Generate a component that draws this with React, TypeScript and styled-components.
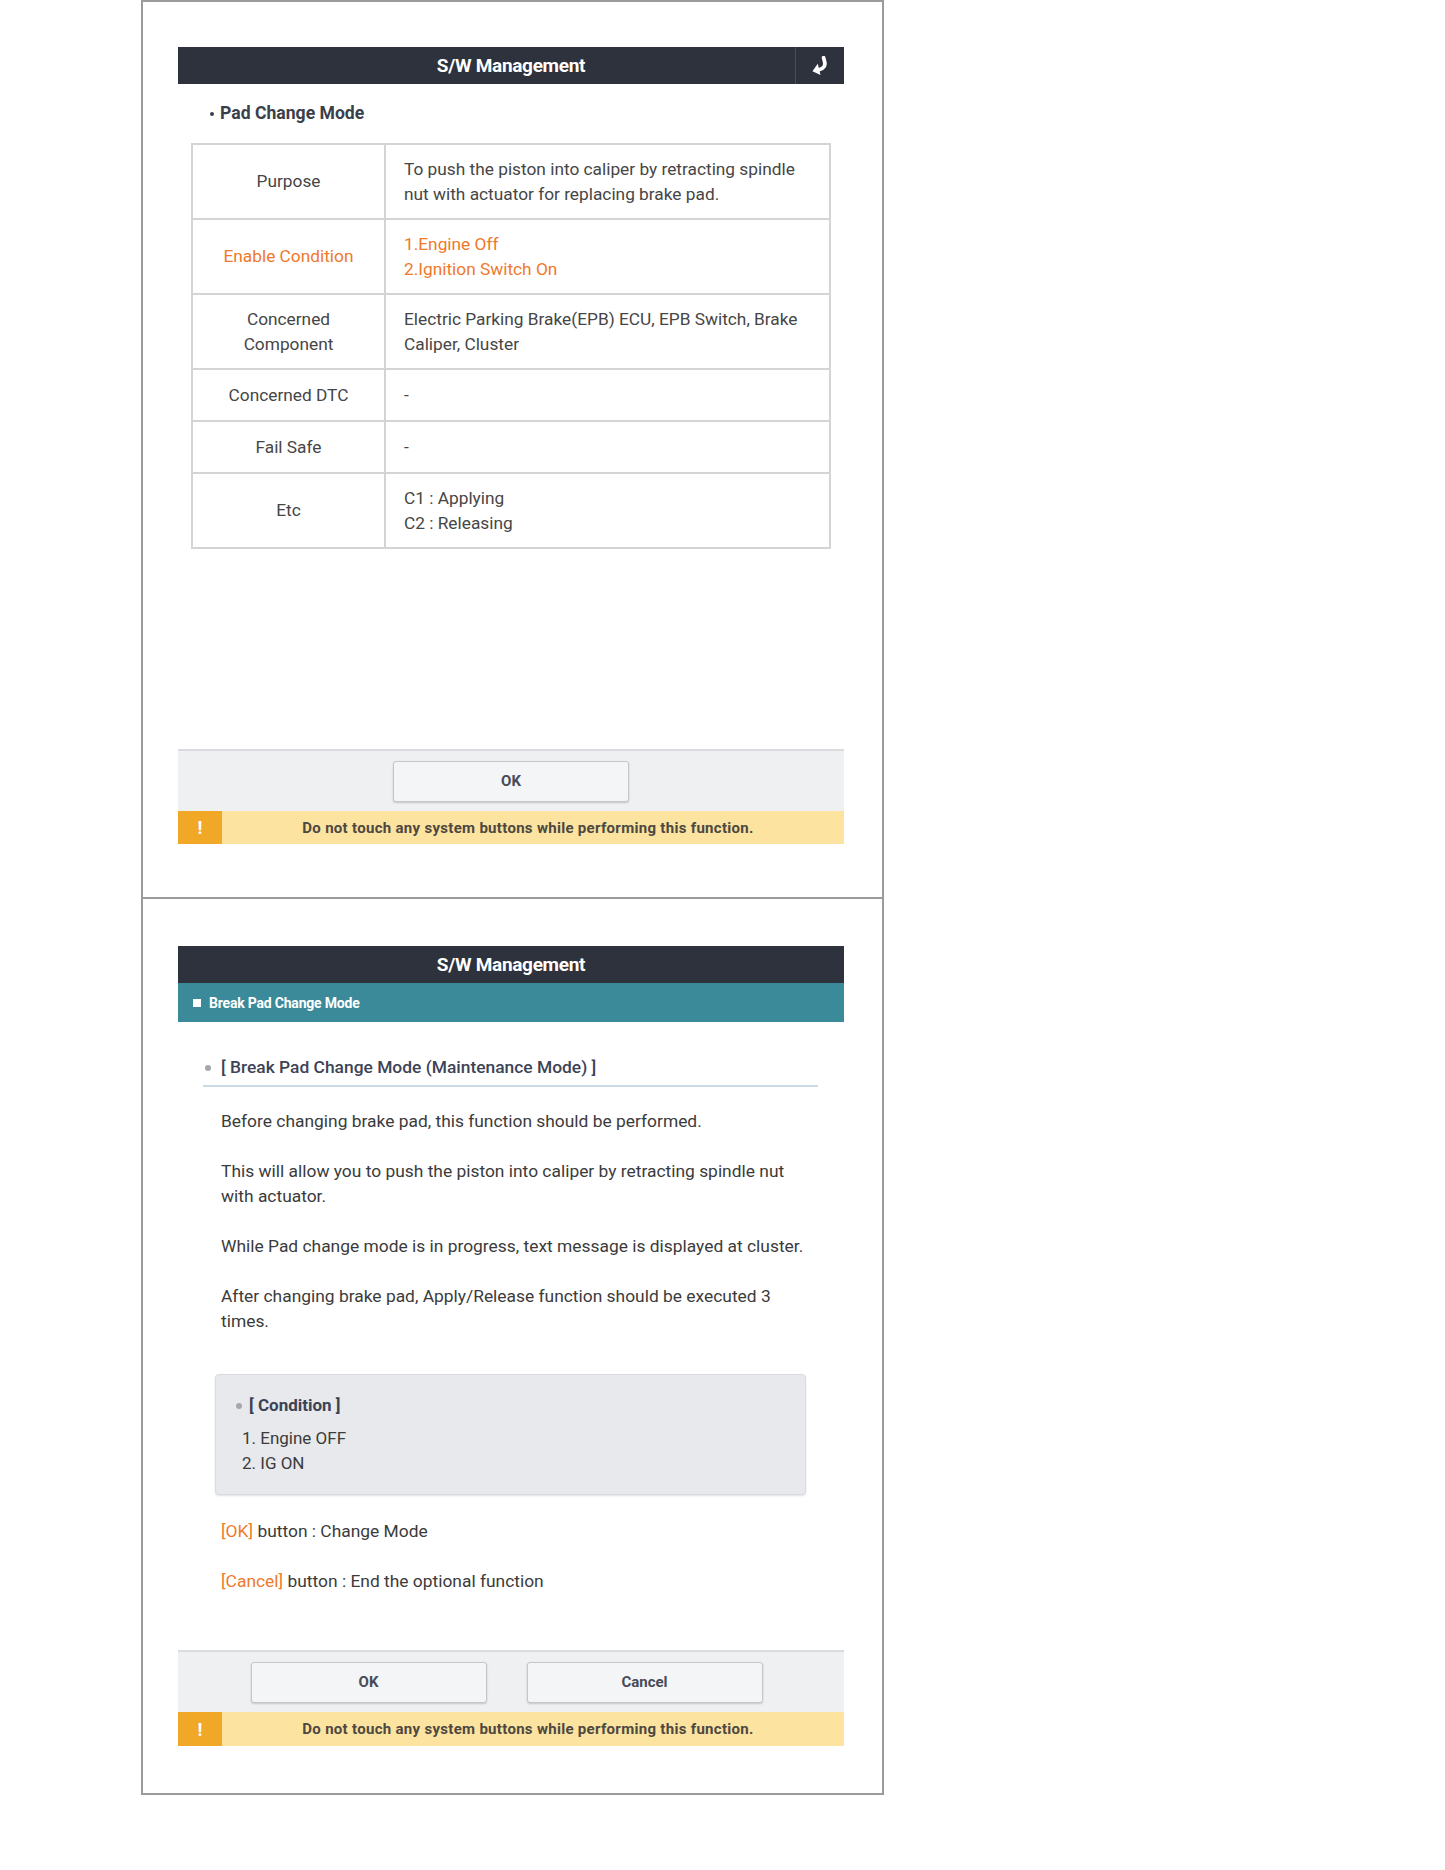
import React from 'react';
import styled, { createGlobalStyle } from 'styled-components';

const GlobalStyle = createGlobalStyle`
  html, body { margin: 0; padding: 0; background: #ffffff; }
  body { font-family: Roboto, "Liberation Sans", Arial, sans-serif; color: #3b3b3b; }
  *, *::before, *::after { box-sizing: border-box; }
`;

const Frame = styled.div`
  margin-left: 141px;
  width: 743px;
  border: 2px solid #9b9b9b;
  display: flex;
  flex-direction: column;
`;

const Panel = styled.section<{ $h: number; $top: number; $bottom: number; $divider?: boolean }>`
  height: ${(p) => p.$h}px;
  padding: ${(p) => p.$top}px 38px ${(p) => p.$bottom}px 35px;
  border-top: ${(p) => (p.$divider ? '2px solid #9b9b9b' : 'none')};
  display: flex;
  flex-direction: column;
`;

const TitleBar = styled.header`
  height: 37px;
  background: #2d323c;
  display: grid;
  grid-template-columns: 49px 1fr 49px;
  align-items: stretch;
  color: #ffffff;
`;

const TitleText = styled.h1`
  grid-column: 2;
  margin: 0;
  align-self: center;
  text-align: center;
  font-size: 19px;
  font-weight: 700;
  letter-spacing: -0.3px;
`;

const BackCell = styled.div`
  grid-column: 3;
  border-left: 1px solid #474d59;
  display: flex;
  align-items: center;
  justify-content: center;
`;

const SubBar = styled.div`
  height: 39px;
  background: #3a8a99;
  display: flex;
  align-items: center;
  gap: 8px;
  padding-left: 15px;
  color: #ffffff;
  font-size: 14px;
  font-weight: 700;
  letter-spacing: -0.2px;
`;

const Square = styled.span`
  width: 8px;
  height: 8px;
  background: #ffffff;
`;

const Subtitle = styled.div`
  padding: 17px 0 17px 32px;
  line-height: 25px;
  font-size: 17.6px;
  font-weight: 700;
  color: #3a3f4a;
  display: flex;
  align-items: center;
  gap: 6px;
`;

const Dot = styled.span<{ $size: number; $color: string }>`
  width: ${(p) => p.$size}px;
  height: ${(p) => p.$size}px;
  border-radius: 50%;
  background: ${(p) => p.$color};
  flex: none;
`;

const Spec = styled.table`
  margin: 0 13px;
  width: calc(100% - 26px);
  border-collapse: collapse;
  border: 2px solid #c6c6c6;
  font-size: 17.3px;
  line-height: 25px;
  color: #464646;
`;

const SpecRow = styled.tr<{ $h: number }>`
  height: ${(p) => p.$h}px;
`;

const Label = styled.th<{ $accent?: boolean }>`
  width: 193px;
  padding: 0 10px;
  border: 2px solid #d4d4d4;
  font-weight: 400;
  text-align: center;
  vertical-align: middle;
  color: ${(p) => (p.$accent ? '#f0792b' : '#464646')};
`;

const Value = styled.td<{ $accent?: boolean }>`
  padding: 0 18px;
  border: 2px solid #d4d4d4;
  text-align: left;
  vertical-align: middle;
  color: ${(p) => (p.$accent ? '#f0792b' : '#464646')};
`;

const Footer = styled.footer`
  margin-top: auto;
  display: flex;
  flex-direction: column;
`;

const ButtonRow = styled.div<{ $shift?: number }>`
  height: 62px;
  background: #eff0f2;
  border-top: 2px solid #d9dbde;
  display: flex;
  align-items: center;
  justify-content: center;
  gap: 40px;
  padding-right: ${(p) => p.$shift ?? 0}px;
`;

const Button = styled.button`
  width: 236px;
  height: 41px;
  background: #f4f5f7;
  border: 1px solid #c3c6cb;
  border-radius: 3px;
  box-shadow: 0 1px 2px rgba(0, 0, 0, 0.18);
  font-family: Roboto, "Liberation Sans", Arial, sans-serif;
  font-size: 15px;
  font-weight: 700;
  color: #474c57;
  cursor: pointer;
`;

const Warning = styled.div<{ $h: number }>`
  height: ${(p) => p.$h}px;
  display: grid;
  grid-template-columns: 44px 1fr;
`;

const WarnIcon = styled.div`
  background: #f0a826;
  color: #ffffff;
  font-size: 18px;
  font-weight: 700;
  display: flex;
  align-items: center;
  justify-content: center;
`;

const WarnText = styled.div`
  background: #fce39f;
  display: flex;
  align-items: center;
  justify-content: center;
  padding-right: 10px;
  font-size: 15px;
  font-weight: 700;
  color: #4d4841;
  letter-spacing: 0.3px;
`;

const SectionTitle = styled.h2`
  margin: 33px 26px 0 25px;
  padding: 0 0 5px 2px;
  border-bottom: 2px solid #cbd9e2;
  display: flex;
  align-items: center;
  gap: 10px;
  line-height: 25px;
  font-size: 17.4px;
  font-weight: 500;
  color: #3d4356;
`;

const TextBlock = styled.div`
  margin: 22px 0 0 43px;
  width: 586px;
  display: flex;
  flex-direction: column;
  gap: 25px;
  font-size: 17.4px;
  line-height: 25px;
  color: #3b3b3b;
`;

const Para = styled.p`
  margin: 0;
`;

const ConditionBox = styled.div`
  margin: 40px 38px 0 37px;
  padding: 18px 20px 18px 20px;
  background: #e7e9ec;
  border: 1px solid #d9dce0;
  border-radius: 4px;
  box-shadow: 0 1px 2px rgba(0, 0, 0, 0.12);
  display: flex;
  flex-direction: column;
  line-height: 25px;
  font-size: 17px;
`;

const ConditionTitle = styled.div`
  display: flex;
  align-items: center;
  gap: 7px;
  font-weight: 700;
  color: #3d4356;
`;

const ConditionList = styled.ol`
  margin: 8px 0 0 6px;
  padding: 0;
  list-style: none;
  color: #3b3b3b;
`;

const HintBlock = styled(TextBlock)`
  margin-top: 24px;
`;

const Key = styled.span`
  color: #f0792b;
`;

const BackIcon = () => (
  <svg width="22" height="20" viewBox="0 0 20 18" aria-label="Back">
    <g transform="rotate(-14 10 9)">
      <path d="M15 2.5 V6.5 C15 10 12.5 12 9 12 H7" stroke="#ffffff" strokeWidth="3.4" fill="none" strokeLinecap="round" />
      <path d="M8.5 6.5 L2.2 12 L8.5 17 Z" fill="#ffffff" />
    </g>
  </svg>
);

const WarningBar = ({ h }: { h: number }) => (
  <Warning $h={h}>
    <WarnIcon>!</WarnIcon>
    <WarnText>Do not touch any system buttons while performing this function.</WarnText>
  </Warning>
);

const rows: { label: React.ReactNode; value: React.ReactNode; h: number; accent?: boolean }[] = [
  {
    label: 'Purpose',
    value: 'To push the piston into caliper by retracting spindle nut with actuator for replacing brake pad.',
    h: 75,
  },
  {
    label: 'Enable Condition',
    value: (
      <>
        1.Engine Off
        <br />
        2.Ignition Switch On
      </>
    ),
    h: 75,
    accent: true,
  },
  {
    label: (
      <>
        Concerned
        <br />
        Component
      </>
    ),
    value: 'Electric Parking Brake(EPB) ECU, EPB Switch, Brake Caliper, Cluster',
    h: 75,
  },
  { label: 'Concerned DTC', value: '-', h: 52 },
  { label: 'Fail Safe', value: '-', h: 52 },
  {
    label: 'Etc',
    value: (
      <>
        C1 : Applying
        <br />
        C2 : Releasing
      </>
    ),
    h: 75,
  },
];

export default function App() {
  return (
    <>
      <GlobalStyle />
      <Frame>
        <Panel $h={895} $top={45} $bottom={53}>
          <TitleBar>
            <TitleText>S/W Management</TitleText>
            <BackCell>
              <BackIcon />
            </BackCell>
          </TitleBar>
          <Subtitle>
            <Dot $size={4} $color="#3a3f4a" />
            Pad Change Mode
          </Subtitle>
          <Spec>
            <tbody>
              {rows.map((r, i) => (
                <SpecRow key={i} $h={r.h}>
                  <Label $accent={r.accent}>{r.label}</Label>
                  <Value $accent={r.accent}>{r.value}</Value>
                </SpecRow>
              ))}
            </tbody>
          </Spec>
          <Footer>
            <ButtonRow>
              <Button>OK</Button>
            </ButtonRow>
            <WarningBar h={33} />
          </Footer>
        </Panel>

        <Panel $h={896} $top={47} $bottom={47} $divider>
          <TitleBar>
            <TitleText>S/W Management</TitleText>
          </TitleBar>
          <SubBar>
            <Square />
            Break Pad Change Mode
          </SubBar>
          <SectionTitle>
            <Dot $size={6} $color="#a3a8ae" />
            [ Break Pad Change Mode (Maintenance Mode) ]
          </SectionTitle>
          <TextBlock>
            <Para>Before changing brake pad, this function should be performed.</Para>
            <Para>This will allow you to push the piston into caliper by retracting spindle nut with actuator.</Para>
            <Para>While Pad change mode is in progress, text message is displayed at cluster.</Para>
            <Para>After changing brake pad, Apply/Release function should be executed 3 times.</Para>
          </TextBlock>
          <ConditionBox>
            <ConditionTitle>
              <Dot $size={6} $color="#a3a8ae" />
              [ Condition ]
            </ConditionTitle>
            <ConditionList>
              <li>1. Engine OFF</li>
              <li>2. IG ON</li>
            </ConditionList>
          </ConditionBox>
          <HintBlock>
            <Para>
              <Key>[OK]</Key> button : Change Mode
            </Para>
            <Para>
              <Key>[Cancel]</Key> button : End the optional function
            </Para>
          </HintBlock>
          <Footer>
            <ButtonRow $shift={9}>
              <Button>OK</Button>
              <Button>Cancel</Button>
            </ButtonRow>
            <WarningBar h={34} />
          </Footer>
        </Panel>
      </Frame>
    </>
  );
}
